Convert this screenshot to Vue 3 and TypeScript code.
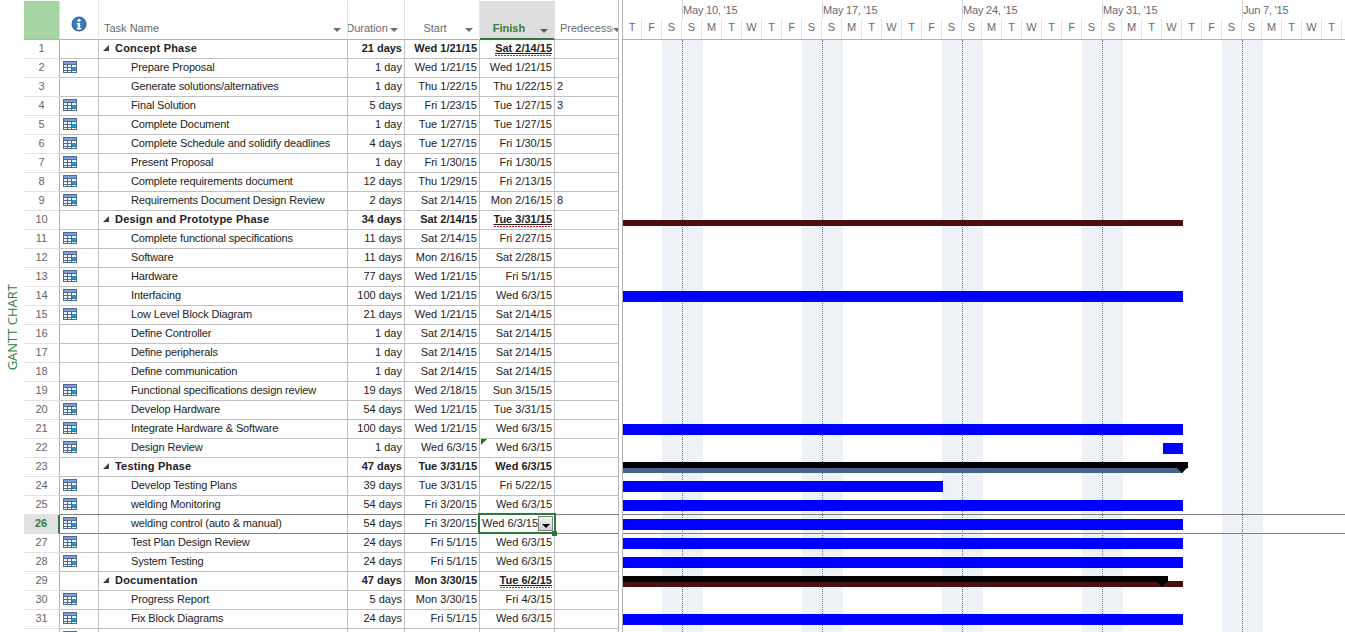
<script setup lang="ts">
interface Task {
  id: number
  name: string
  dur: string
  start: string
  finish: string
  pred?: string
  summary?: boolean
  icon?: boolean
  flagged?: boolean
}

interface Bar {
  row: number
  type: 'task' | 'top' | 'red' | 'steel'
  left: number
  width: number
}

function t(
  id: number,
  name: string,
  dur: string,
  start: string,
  finish: string,
  extra: Partial<Task> = {},
): Task {
  return { id, name, dur, start, finish, icon: true, ...extra }
}

const noIcon = { icon: false }
const phase = { icon: false, summary: true }

const tasks: Task[] = [
  t(1, 'Concept Phase', '21 days', 'Wed 1/21/15', 'Sat 2/14/15', { ...phase, flagged: true }),
  t(2, 'Prepare Proposal', '1 day', 'Wed 1/21/15', 'Wed 1/21/15'),
  t(3, 'Generate solutions/alternatives', '1 day', 'Thu 1/22/15', 'Thu 1/22/15', { ...noIcon, pred: '2' }),
  t(4, 'Final Solution', '5 days', 'Fri 1/23/15', 'Tue 1/27/15', { pred: '3' }),
  t(5, 'Complete Document', '1 day', 'Tue 1/27/15', 'Tue 1/27/15'),
  t(6, 'Complete Schedule and solidify deadlines', '4 days', 'Tue 1/27/15', 'Fri 1/30/15'),
  t(7, 'Present Proposal', '1 day', 'Fri 1/30/15', 'Fri 1/30/15'),
  t(8, 'Complete requirements document', '12 days', 'Thu 1/29/15', 'Fri 2/13/15'),
  t(9, 'Requirements Document Design Review', '2 days', 'Sat 2/14/15', 'Mon 2/16/15', { pred: '8' }),
  t(10, 'Design and Prototype Phase', '34 days', 'Sat 2/14/15', 'Tue 3/31/15', { ...phase, flagged: true }),
  t(11, 'Complete functional specifications', '11 days', 'Sat 2/14/15', 'Fri 2/27/15'),
  t(12, 'Software', '11 days', 'Mon 2/16/15', 'Sat 2/28/15'),
  t(13, 'Hardware', '77 days', 'Wed 1/21/15', 'Fri 5/1/15'),
  t(14, 'Interfacing', '100 days', 'Wed 1/21/15', 'Wed 6/3/15'),
  t(15, 'Low Level Block Diagram', '21 days', 'Wed 1/21/15', 'Sat 2/14/15'),
  t(16, 'Define Controller', '1 day', 'Sat 2/14/15', 'Sat 2/14/15', noIcon),
  t(17, 'Define peripherals', '1 day', 'Sat 2/14/15', 'Sat 2/14/15', noIcon),
  t(18, 'Define communication', '1 day', 'Sat 2/14/15', 'Sat 2/14/15', noIcon),
  t(19, 'Functional specifications design review', '19 days', 'Wed 2/18/15', 'Sun 3/15/15'),
  t(20, 'Develop Hardware', '54 days', 'Wed 1/21/15', 'Tue 3/31/15'),
  t(21, 'Integrate Hardware & Software', '100 days', 'Wed 1/21/15', 'Wed 6/3/15'),
  t(22, 'Design Review', '1 day', 'Wed 6/3/15', 'Wed 6/3/15'),
  t(23, 'Testing Phase', '47 days', 'Tue 3/31/15', 'Wed 6/3/15', phase),
  t(24, 'Develop Testing Plans', '39 days', 'Tue 3/31/15', 'Fri 5/22/15'),
  t(25, 'welding Monitoring', '54 days', 'Fri 3/20/15', 'Wed 6/3/15'),
  t(26, 'welding control (auto & manual)', '54 days', 'Fri 3/20/15', 'Wed 6/3/15'),
  t(27, 'Test Plan Design Review', '24 days', 'Fri 5/1/15', 'Wed 6/3/15'),
  t(28, 'System Testing', '24 days', 'Fri 5/1/15', 'Wed 6/3/15'),
  t(29, 'Documentation', '47 days', 'Mon 3/30/15', 'Tue 6/2/15', { ...phase, flagged: true }),
  t(30, 'Progress Report', '5 days', 'Mon 3/30/15', 'Fri 4/3/15'),
  t(31, 'Fix Block Diagrams', '24 days', 'Fri 5/1/15', 'Wed 6/3/15'),
  t(32, '', '', '', ''),
]

const selectedId = 26
const dayWidth = 20

// day letters starting on the first visible Thursday
const dayNames = ['T', 'F', 'S', 'S', 'M', 'T', 'W']
const days = Array.from({ length: 36 }, (_, i) => dayNames[i % 7])
const weeks = ["May 10, '15", "May 17, '15", "May 24, '15", "May 31, '15", "Jun 7, '15"]

const bars: Bar[] = [
  { row: 10, type: 'red', left: 0, width: 560 },
  { row: 14, type: 'task', left: 0, width: 560 },
  { row: 21, type: 'task', left: 0, width: 560 },
  { row: 22, type: 'task', left: 540, width: 20 },
  { row: 23, type: 'steel', left: 0, width: 560 },
  { row: 23, type: 'top', left: 0, width: 565 },
  { row: 24, type: 'task', left: 0, width: 320 },
  { row: 25, type: 'task', left: 0, width: 560 },
  { row: 26, type: 'task', left: 0, width: 560 },
  { row: 27, type: 'task', left: 0, width: 560 },
  { row: 28, type: 'task', left: 0, width: 560 },
  { row: 29, type: 'red', left: 0, width: 560 },
  { row: 29, type: 'top', left: 0, width: 545 },
  { row: 31, type: 'task', left: 0, width: 560 },
]

const summaryEnds: Record<number, number> = { 23: 565, 29: 545 }

function barsFor(id: number) {
  return bars.filter((b) => b.row === id)
}

function weekendLeft(i: number) {
  return 39 + i * dayWidth * 7
}
</script>

<template>
  <div class="page">
    <div class="side-label"><span>GANTT CHART</span></div>

    <section class="sheet">
      <header class="sheet-row sheet-head">
        <div class="hd hd-id"></div>
        <div class="hd hd-info">
          <svg width="16" height="16" viewBox="0 0 16 16">
            <circle cx="8" cy="8" r="7.5" fill="#2f6ca6" />
            <circle cx="8" cy="8" r="6" fill="#3a7cb8" />
            <circle cx="8" cy="4.3" r="1.6" fill="#fff" />
            <path d="M5.8 7h3.4v5h1v1.4H5.8V12h1V8.4h-1z" fill="#fff" />
          </svg>
        </div>
        <div class="hd hd-task"><span>Task Name</span><i class="arrow a-task"></i></div>
        <div class="hd hd-dur"><span>Duration</span><i class="arrow a-dur"></i></div>
        <div class="hd hd-start"><span>Start</span><i class="arrow a-start"></i></div>
        <div class="hd hd-finish"><span>Finish</span><i class="arrow a-finish"></i></div>
        <div class="hd hd-pred"><span>Predecessors</span><i class="arrow a-pred"></i></div>
      </header>

      <div
        v-for="task in tasks"
        :key="task.id"
        class="sheet-row"
        :class="{ summary: task.summary, selected: task.id === selectedId }"
      >
        <div class="cell c-id">{{ task.id === 32 ? '' : task.id }}</div>
        <div class="cell c-ind">
          <svg v-if="task.icon" width="14" height="12" viewBox="0 0 14 12">
            <rect width="14" height="12" fill="#4d6a92" />
            <rect x="1" y="1" width="12" height="2" fill="#7d9be0" />
            <rect x="1" y="4" width="3" height="2" fill="#f4f6fa" />
            <rect x="5" y="4" width="3" height="2" fill="#f4f6fa" />
            <rect x="9" y="4" width="4" height="2" fill="#f4f6fa" />
            <rect x="1" y="7" width="3" height="2" fill="#f4f6fa" />
            <rect x="5" y="7" width="3" height="2" fill="#f4f6fa" />
            <rect x="9" y="6" width="4" height="3" fill="#0aa4dc" />
            <rect x="1" y="10" width="3" height="1" fill="#f4f6fa" />
            <rect x="5" y="10" width="3" height="1" fill="#f4f6fa" />
            <rect x="9" y="10" width="4" height="1" fill="#f4f6fa" />
          </svg>
        </div>
        <div class="cell c-task" :class="{ indented: !task.summary }">
          <i v-if="task.summary" class="collapse"></i>{{ task.name }}
        </div>
        <div class="cell c-num">{{ task.dur }}</div>
        <div class="cell c-num">{{ task.start }}</div>
        <div class="cell c-num c-finish" :class="{ editing: task.id === selectedId }">
          <i v-if="task.id === 22" class="corner"></i>
          <span :class="{ flagged: task.flagged }">{{ task.finish }}</span>
          <div v-if="task.id === selectedId" class="cell-frame">
            <i class="cell-drop"><b></b></i>
            <i class="cell-handle"></i>
          </div>
        </div>
        <div class="cell c-pred">{{ task.pred }}</div>
      </div>
    </section>

    <div class="splitter"></div>

    <section class="timeline">
      <header class="time-head">
        <div class="weeks">
          <div class="week-lead"></div>
          <div v-for="w in weeks" :key="w" class="week">{{ w }}</div>
        </div>
        <div class="days">
          <div v-for="(d, i) in days" :key="i" class="day">{{ d }}</div>
        </div>
      </header>

      <div class="time-body">
        <div
          v-for="(w, i) in weeks"
          :key="w"
          class="weekend"
          :style="{ left: weekendLeft(i) + 'px' }"
        ><i></i></div>

        <div
          v-for="task in tasks"
          :key="task.id"
          class="track"
          :class="{ selected: task.id === selectedId }"
        >
          <div
            v-for="(b, i) in barsFor(task.id)"
            :key="i"
            class="bar"
            :class="'bar-' + b.type"
            :style="{ left: b.left + 'px', width: b.width + 'px' }"
          ></div>
          <div
            v-if="summaryEnds[task.id]"
            class="bar-end"
            :style="{ left: summaryEnds[task.id] - 11 + 'px' }"
          ></div>
        </div>
      </div>
    </section>
  </div>
</template>

<style scoped>
.page {
  display: flex;
  width: 1345px;
  height: 632px;
  overflow: hidden;
  background: #fff;
  font-family: "Liberation Sans", Arial, sans-serif;
  font-size: 11px;
  color: #222;
}

.side-label {
  flex: 0 0 24px;
  padding-top: 284px;
  padding-left: 5px;
  box-sizing: border-box;
}

.side-label span {
  display: block;
  writing-mode: vertical-rl;
  transform: rotate(180deg);
  font-family: "Open Sans", sans-serif;
  font-size: 13px;
  line-height: 14px;
  color: #2f7d3a;
  white-space: nowrap;
}

.sheet {
  flex: 0 0 595px;
}

.sheet-row {
  display: grid;
  grid-template-columns: 36px 39px 249px 57px 75px 75px 64px;
  height: 19px;
}

.sheet-head {
  height: 40px;
  border-bottom: 0;
}

.hd {
  position: relative;
  display: flex;
  align-items: center;
  justify-content: center;
  box-sizing: border-box;
  height: 40px;
  padding-top: 17px;
  overflow: hidden;
  color: #6a6a6a;
  white-space: nowrap;
  border-bottom: 1px solid #b1b1b1;
  border-right: 1px solid #e4e4e4;
}

.hd span {
  flex-shrink: 0;
}

.hd-id {
  background: #a6d5a4;
  margin-top: 1px;
  height: 39px;
  border-right-color: #dcdcdc;
}

.hd-info {
  padding-top: 9px;
}

.hd-task {
  justify-content: flex-start;
  padding-left: 5px;
}

.hd-dur {
  padding-right: 18px;
}

.hd-start {
  padding-right: 14px;
}

.hd-finish {
  margin-top: 1px;
  height: 39px;
  padding-top: 16px;
  padding-right: 16px;
  background: #dedede;
  color: #3a7a3f;
  font-weight: 700;
  border-bottom: 2px solid #2f7a3b;
  border-right-color: #dedede;
}

.hd-pred {
  justify-content: flex-start;
  padding-left: 5px;
  border-right-color: #c4c4c4;
}

.hd-pred span {
  flex-shrink: 1;
  width: 53px;
  overflow: hidden;
}

.arrow {
  position: absolute;
  top: 28px;
  width: 0;
  height: 0;
  border-left: 4px solid transparent;
  border-right: 4px solid transparent;
  border-top: 4px solid #6f6f6f;
}

.a-task { right: 6px; }
.a-dur { right: 6px; }
.a-start { right: 6px; }
.a-finish { right: 6px; border-top-color: #2f7a3b; }
.a-pred { right: -3px; }

.cell {
  box-sizing: border-box;
  height: 19px;
  line-height: 17px;
  white-space: nowrap;
  overflow: hidden;
  border-right: 1px solid #c0c0c0;
  border-bottom: 1px solid #c0c0c0;
}

.c-id {
  text-align: center;
  color: #666;
  border-right-color: #b1b1b1;
  border-bottom-color: #e2e2e2;
}

.c-ind {
  padding: 2px 0 0 3px;
  line-height: 0;
}

.c-task {
  padding-left: 16px;
  letter-spacing: 0.2px;
}

.c-task.indented {
  padding-left: 32px;
  letter-spacing: -0.13px;
}

.c-num {
  text-align: right;
  padding-right: 2px;
}

.c-pred {
  padding-left: 2px;
  border-right-color: #b1b1b1;
}

.summary .cell:not(.c-id) {
  font-weight: 700;
}

.collapse {
  position: absolute;
  margin: 5px 0 0 -12px;
  width: 0;
  height: 0;
  border-left: 6px solid transparent;
  border-bottom: 6px solid #404040;
}

.flagged {
  display: inline-block;
  line-height: 13px;
  padding-bottom: 1px;
  text-decoration: underline;
  background: repeating-linear-gradient(90deg, #e01010 0 2px, transparent 2px 3px) left bottom / 100% 1px no-repeat;
}

.c-finish {
  position: relative;
}

.corner {
  position: absolute;
  left: 1px;
  top: 0;
  width: 0;
  height: 0;
  border-top: 6px solid #12800f;
  border-right: 6px solid transparent;
}

.selected .cell {
  border-bottom-color: #808080;
  box-shadow: 0 -1px 0 #808080;
}

.selected .c-id {
  background: #e1e1e1;
  color: #3a7a3f;
  font-weight: 700;
  border-right: 2px solid #2f7a3b;
  box-shadow: none;
  border-bottom-color: #e1e1e1;
}

.c-finish.editing {
  overflow: visible;
  text-align: left;
  padding-left: 2px;
}

.cell-frame {
  position: absolute;
  left: -2px;
  right: -2px;
  top: -2px;
  bottom: -1px;
  border: 2px solid #2f7a3b;
  z-index: 3;
}

.cell-drop {
  position: absolute;
  right: 1px;
  top: 1px;
  box-sizing: border-box;
  width: 15px;
  height: 15px;
  border: 1px solid #808080;
  background: linear-gradient(#f4f4f4, #cfcfcf);
}

.cell-drop b {
  position: absolute;
  left: 3px;
  top: 7px;
  width: 0;
  height: 0;
  border-left: 4px solid transparent;
  border-right: 4px solid transparent;
  border-top: 4px solid #000;
}

.cell-handle {
  position: absolute;
  right: -3px;
  bottom: -4px;
  width: 5px;
  height: 5px;
  background: #2f7a3b;
}

.splitter {
  flex: 0 0 3px;
}

.timeline {
  flex: 1;
  min-width: 0;
  overflow: hidden;
  border-left: 1px solid #b1b1b1;
}

.time-head {
  box-sizing: border-box;
  height: 40px;
  overflow: hidden;
  border-bottom: 1px solid #b1b1b1;
}

.weeks {
  display: flex;
  height: 19px;
  color: #6a6a6a;
  white-space: nowrap;
}

.week-lead {
  flex: 0 0 59px;
}

.week {
  flex: 0 0 140px;
  box-sizing: border-box;
  padding: 4px 0 0 0;
  letter-spacing: -0.2px;
  border-left: 1px solid #d4d4d4;
}

.days {
  display: flex;
  height: 20px;
  color: #6a6a6a;
}

.day {
  flex: 0 0 20px;
  box-sizing: border-box;
  text-align: center;
  line-height: 17px;
  border-right: 1px solid #e2e2e2;
}

.day:first-child {
  flex-basis: 19px;
}

.time-body {
  position: relative;
}

.weekend {
  position: absolute;
  top: 0;
  height: 592px;
  width: 41px;
  background: #eef1f6;
}

.weekend i {
  position: absolute;
  left: 20px;
  top: 0;
  bottom: 0;
  border-left: 1px dotted #707070;
}

.track {
  position: relative;
  height: 19px;
  z-index: 1;
}

.track.selected {
  box-shadow: 0 -1px 0 #808080, inset 0 -1px 0 #808080;
}

.bar {
  position: absolute;
}

.bar-task {
  top: 4px;
  height: 11px;
  background: #0000ff;
}

.bar-top {
  top: 4px;
  height: 6px;
  background: #000;
}

.bar-red {
  top: 9px;
  height: 6px;
  background: #4a1010;
}

.bar-steel {
  top: 10px;
  height: 5px;
  background: #45658a;
}

.bar-end {
  position: absolute;
  top: 10px;
  width: 0;
  height: 0;
  border-left: 5.5px solid transparent;
  border-right: 5.5px solid transparent;
  border-top: 5px solid #000;
}
</style>

<style>
html,
body {
  margin: 0;
  overflow: hidden;
  background: #fff;
}
</style>
